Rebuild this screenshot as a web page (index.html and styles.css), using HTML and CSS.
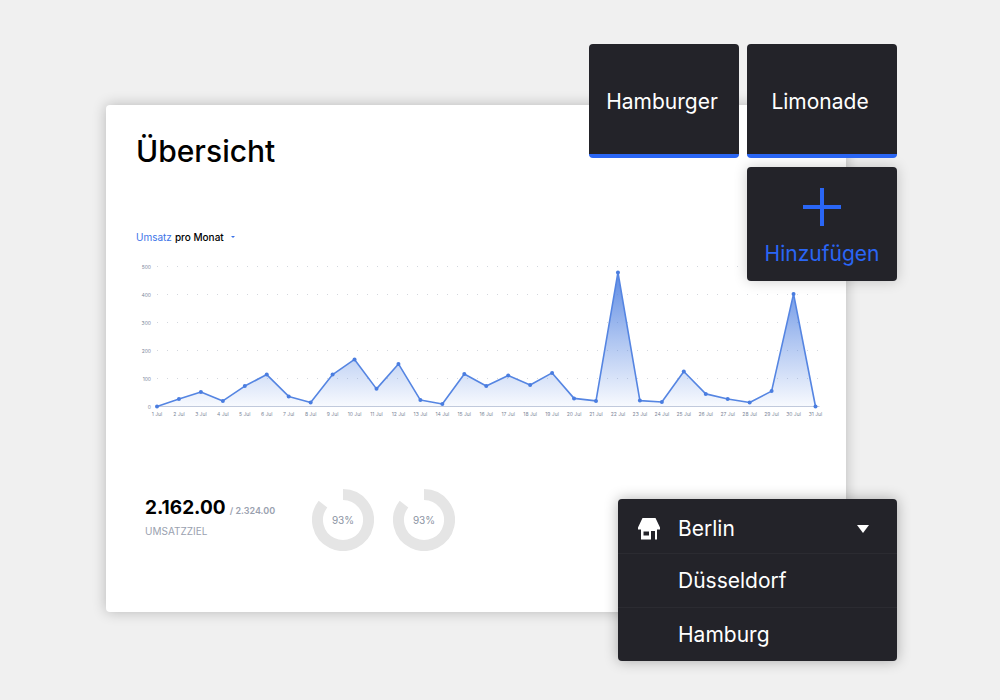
FILE: index.html
```
<!DOCTYPE html>
<html lang="de">
<head>
	<meta charset="UTF-8">
	<meta name="viewport" content="width=device-width, initial-scale=1.0">
	<title>Übersicht</title>
	<link rel="stylesheet" href="styles.css">
</head>
<body>
	<div class="stage">
		<main class="panel">
			<h1>Übersicht</h1>

			<button class="metric-button" type="button"><span class="metric">Umsatz</span> pro Monat <span class="metric-caret"></span></button>

			<!-- Umsatz chart, filled by chart.js -->
			<svg id="chart" class="chart" viewBox="0 0 688 164" role="img" aria-label="Umsatz pro Monat">
				<defs>
					<linearGradient id="area-fill" x1="0" y1="0" x2="0" y2="1">
						<stop offset="0" stop-color="#4a7de0" stop-opacity="0.9"/>
						<stop offset="0.5" stop-color="#4a7de0" stop-opacity="0.45"/>
						<stop offset="1" stop-color="#4a7de0" stop-opacity="0.04"/>
					</linearGradient>
				</defs>
			</svg>

			<section class="goals">
				<div class="goal">
					<p class="goal-value"><strong>2.162.00</strong> <span>/ 2.324.00</span></p>
					<p class="goal-label">UMSATZZIEL</p>
				</div>
				<div class="ring">
					<svg viewBox="0 0 62 62"><path d="M31 5.500A25.500 25.500 0 1 1 11 15.200"/></svg>
					<span>93%</span>
				</div>
				<div class="ring">
					<svg viewBox="0 0 62 62"><path d="M31 5.500A25.500 25.500 0 1 1 11 15.200"/></svg>
					<span>93%</span>
				</div>
			</section>
		</main>

		<!-- Produkte -->
		<div class="tiles">
			<button class="tile" type="button">Hamburger</button>
			<button class="tile" type="button">Limonade</button>
			<button class="tile tile-add" type="button">
				<svg viewBox="0 0 38 38"><path d="M19 0V38M0 19H38"/></svg>
				Hinzufügen
			</button>
		</div>

		<!-- Standorte -->
		<div class="locations">
			<button class="location current" type="button" aria-expanded="true">
				<svg class="store" viewBox="0 0 22 22"><path fill-rule="evenodd" d="M4.500 0H17.500L22 9.500V11.500H19V21.500H17V13H13V21.500H3V11.500H0V9.500ZM5.500 13.500V17.500H11V13.500Z"/></svg>
				<span>Berlin</span>
				<svg class="caret" viewBox="0 0 12 8"><path d="M0 0H12L6 8Z"/></svg>
			</button>
			<button class="location" type="button">Düsseldorf</button>
			<button class="location" type="button">Hamburg</button>
		</div>
	</div>

	<script src="chart.js"></script>
</body>
</html>
```

FILE: styles.css
```
* { box-sizing: border-box; }
body { margin: 0; font-family: Inter, "Liberation Sans", sans-serif; background-color: #f0f0f0; color: #000; }
h1, p { margin: 0; }
button { font: inherit; border: none; margin: 0; padding: 0; cursor: pointer; }
.stage { position: relative; min-height: 100vh; padding: 105px 154px 88px 106px; }

.panel { padding: 24px 22px 61px 30px; background-color: #fff; border-radius: 4px; box-shadow: 0 0 14px rgba(0,0,0,0.24); }
h1 { font-size: 30px; line-height: 44px; font-weight: 500; }

.metric-button { display: flex; align-items: center; gap: 3px; margin-top: 56px; background: none; color: #000; font-size: 10px; line-height: 16px; font-weight: 500; }
.metric { color: #3d74e8; font-weight: 400; }
.metric-caret { margin-left: 4px; border: 2px solid transparent; border-top-color: #3d74e8; border-bottom: 0; }

.chart { display: block; width: 100%; margin-top: 13px; }
.chart text { font-size: 5px; fill: #7d8799; }
.chart .y-label { text-anchor: end; }
.chart .x-label { text-anchor: middle; }
.grid-line { stroke: #d3d7de; stroke-dasharray: 1 9; }
.axis { stroke: #c3cbdc; }
.area { fill: url(#area-fill); }
.line { fill: none; stroke: #5585e2; stroke-width: 1.600; stroke-linejoin: round; }
.dot { fill: #4a7de0; }

.goals { display: flex; align-items: center; margin-top: 67px; padding-left: 9px; }
.goal { width: 167px; padding-bottom: 6px; white-space: nowrap; }
.goal-value { line-height: 24px; font-size: 9px; font-weight: 600; color: #9aa1af; }
.goal-value strong { margin-right: 2px; font-size: 19px; font-weight: 700; color: #000; }
.goal-label { font-size: 10px; line-height: 16px; color: #9aa1af; }
.ring { display: grid; place-items: center; width: 62px; height: 62px; margin-right: 19px; font-size: 10px; color: #8b93a3; }
.ring svg, .ring span { grid-area: 1 / 1; }
.ring path { fill: none; stroke: #e5e5e5; stroke-width: 11; }

.tiles { position: absolute; top: 44px; right: 103px; display: grid; grid-template-columns: 150px 150px; grid-auto-rows: 114px; gap: 9px 8px; }
.tile { display: flex; flex-direction: column; align-items: center; justify-content: center; padding: 6px 4px 0 0; background-color: #232329; border-bottom: 4px solid #2a66f5; border-radius: 4px; color: #fff; font-size: 21px; line-height: 28px; }
.tile-add { grid-column: 2; gap: 14px; padding: 8px 0 0; border-bottom: none; color: #2a66f5; box-shadow: 0 0 14px rgba(0,0,0,0.2); }
.tile-add svg { width: 38px; height: 38px; stroke: #2a66f5; stroke-width: 4; }

.locations { position: absolute; top: 499px; right: 103px; width: 279px; background-color: #232329; border-radius: 4px; box-shadow: 0 0 14px rgba(0,0,0,0.3); }
.location { display: block; width: 100%; height: 54px; padding-left: 60px; background: none; color: #fff; font-size: 21px; line-height: 28px; text-align: left; }
.location + .location { border-top: 1px solid #2b2b31; }
.location.current { display: flex; align-items: center; padding: 5px 28px 0 20px; }
.location.current span { flex: 1; margin-left: 18px; }
.store { width: 22px; height: 22px; fill: #fff; }
.caret { width: 12px; height: 8px; fill: #fff; }
```

FILE: chart.js
```
const values = [0, 27, 52, 20, 73, 114, 36, 14, 114, 168, 63, 152, 23, 9, 116, 73, 111, 77, 120, 29, 20, 479, 21, 16, 125, 45, 27, 14, 55, 402, 0];
const left = 21;
const step = 21.95;
const base = 148.5;
const scale = 0.28;

const chart = document.getElementById('chart');

function add(tag, attrs, text) {
	const el = document.createElementNS('http://www.w3.org/2000/svg', tag);
	for (const name in attrs) el.setAttribute(name, attrs[name]);
	if (text !== undefined) el.textContent = text;
	chart.appendChild(el);
}

const right = left + step * (values.length - 1);
const points = values.map((v, i) => [left + i * step, base - v * scale]);

// grid and y axis
for (let v = 0; v <= 500; v += 100) {
	const y = base - v * scale;
	add('line', { class: v ? 'grid-line' : 'axis', x1: left, x2: right + 4, y1: y, y2: y });
	add('text', { class: 'y-label', x: 15, y: y + 2 }, v);
}

add('polygon', { class: 'area', points: `${left},${base} ${points.join(' ')} ${right},${base}` });
add('polyline', { class: 'line', points: points.join(' ') });

points.forEach(([x, y], i) => {
	add('circle', { class: 'dot', cx: x, cy: y, r: 2 });
	add('text', { class: 'x-label', x: x, y: 158 }, `${i + 1} Jul`);
});
```
